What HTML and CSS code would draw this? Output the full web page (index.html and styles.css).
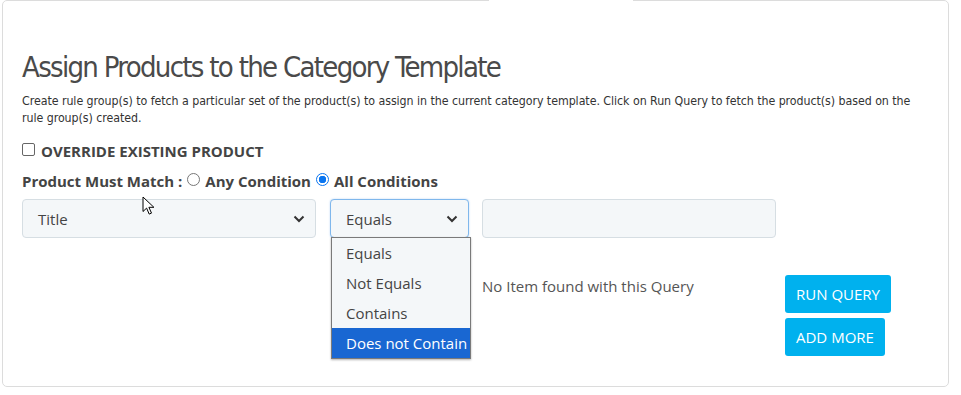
FILE: index.html
```html
<!DOCTYPE html>
<html lang="en">
<head>
    <meta charset="UTF-8">
    <meta name="viewport" content="width=device-width, initial-scale=1.0">
    <title>Assign Products</title>
    <link rel="stylesheet" href="styles.css">
</head>
<body>
    <div class="panel">
        <div class="tab-gap"></div>
        <h1 class="title">Assign Products to the Category Template</h1>
        <p class="desc">Create rule group(s) to fetch a particular set of the product(s) to assign in the current category template. Click on Run Query to fetch the product(s) based on the rule group(s) created.</p>

        <label class="override">
            <span class="checkbox"></span>
            OVERRIDE EXISTING PRODUCT
        </label>

        <div class="match">
            <span>Product Must Match :</span>
            <span class="radio"></span>
            <span>Any Condition</span>
            <span class="radio checked"></span>
            <span>All Conditions</span>
        </div>

        <div class="rule-row">
            <div class="select field-select">
                <span>Title</span>
                <svg class="chevron" viewBox="0 0 12 8"><path d="M1.5 1.5 6 6l4.5-4.5" /></svg>
            </div>
            <div class="select op-select">
                <span>Equals</span>
                <svg class="chevron" viewBox="0 0 12 8"><path d="M1.5 1.5 6 6l4.5-4.5" /></svg>
                <ul class="options">
                    <li>Equals</li>
                    <li>Not Equals</li>
                    <li>Contains</li>
                    <li class="active">Does not Contain</li>
                </ul>
            </div>
            <div class="value-input"></div>
        </div>

        <div class="result-row">
            <div class="empty">No Item found with this Query</div>
            <div class="actions">
                <button class="btn">RUN QUERY</button>
                <button class="btn">ADD MORE</button>
            </div>
        </div>

        <svg class="cursor" viewBox="0 0 13 20" width="13" height="20">
            <path d="M1 1v14.5l3.6-3.4 2.6 6 2.3-1-2.6-5.8h5z" fill="#fff" stroke="#000" stroke-width="1" stroke-linejoin="round" />
        </svg>
    </div>
</body>
</html>
```

FILE: styles.css
```css
* { margin: 0; padding: 0; box-sizing: border-box; }
body { font-family: "Open Sans", "Liberation Sans", sans-serif; background: #fff; color: #444; }
.panel { position: relative; width: 947px; height: 387px; margin-left: 2px; border: 1px solid #dcdcdc; border-radius: 5px; padding: 46px 19px 0 19px; }
.tab-gap { position: absolute; top: -1px; left: 486px; width: 144px; height: 3px; background: #fff; }
.title { font-family: "DejaVu Sans Condensed", "Liberation Sans", sans-serif; font-weight: normal; font-size: 29px; color: #4a4a4a; line-height: 40px; letter-spacing: -1.7px; }
.desc { font-family: "DejaVu Sans Condensed", "Liberation Sans", sans-serif; font-size: 12.3px; line-height: 17px; color: #333; margin-top: 6px; max-width: 900px; letter-spacing: -0.05px; }
.override { display: flex; align-items: center; gap: 6px; margin-top: 14px; font-weight: bold; font-size: 15px; color: #444; line-height: 20px; }
.checkbox { width: 13px; height: 13px; border: 1px solid #666; border-radius: 2px; background: #fff; margin-top: -3px; }
.match { display: flex; align-items: center; gap: 4px; margin-top: 10px; font-weight: bold; font-size: 15px; color: #444; line-height: 20px; }
.radio { width: 13px; height: 13px; border: 1px solid #777; border-radius: 50%; background: #fff; margin: -4px 1px 0 1px; }
.radio.checked { border: 1.5px solid #0a75f0; background: radial-gradient(circle, #0a75f0 0 3.5px, #fff 4px); }
.rule-row { display: flex; gap: 14px; margin-top: 8px; align-items: flex-start; }
.select { position: relative; height: 39px; background: #f4f7f9; border: 1px solid #d6dee3; border-radius: 4px; display: flex; align-items: center; justify-content: space-between; padding: 0 10px 0 15px; font-size: 15px; color: #444; }
.field-select { width: 294px; }
.op-select { width: 139px; border-color: #7fb7ec; box-shadow: 0 0 2px rgba(80,150,230,0.4); }
.chevron { width: 12px; height: 8px; fill: none; stroke: #333; stroke-width: 2; }
.options { position: absolute; top: 37px; left: 0; width: 140px; list-style: none; background: #f4f7f9; border: 1px solid #7a7a7a; box-shadow: 0 1px 2px rgba(0,0,0,0.3); }
.options li { height: 30px; line-height: 30px; padding-left: 14px; font-size: 15px; color: #444; white-space: nowrap; }
.options li.active { background: #1967d2; color: #fff; }
.value-input { width: 294px; height: 39px; background: #f4f7f9; border: 1px solid #d6dee3; border-radius: 4px; margin-left: -1px; }
.result-row { display: flex; margin-top: 37px; padding-left: 460px; }
.empty { width: 303px; font-size: 15px; color: #555; line-height: 20px; margin-top: 1px; }
.actions { display: flex; flex-direction: column; align-items: flex-start; gap: 5px; }
.btn { background: #00b1ee; color: #fff; border: none; border-radius: 3px; font-family: "Open Sans", sans-serif; font-size: 15px; height: 38px; padding: 0 11px; }
.cursor { position: absolute; left: 139px; top: 195px; }
```
